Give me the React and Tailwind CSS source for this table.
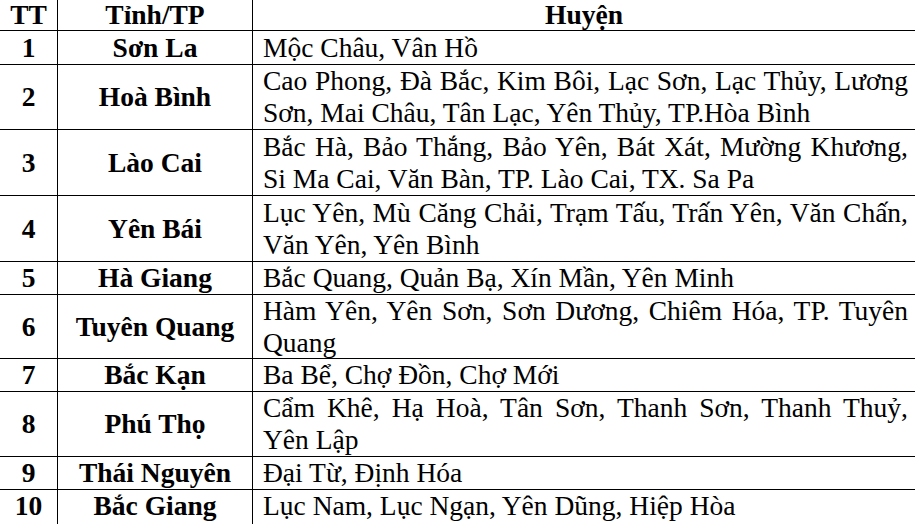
import React from "react";

const rows = [
  ["1", "Sơn La", ["Mộc Châu, Vân Hồ"], "h-[34px]"],
  ["2", "Hoà Bình", ["Cao Phong, Đà Bắc, Kim Bôi, Lạc Sơn, Lạc Thủy, Lương", "Sơn, Mai Châu, Tân Lạc, Yên Thủy, TP.Hòa Bình"], "h-[65px]"],
  ["3", "Lào Cai", ["Bắc Hà, Bảo Thắng, Bảo Yên, Bát Xát, Mường Khương,", "Si Ma Cai, Văn Bàn, TP. Lào Cai, TX. Sa Pa"], "h-[66px]"],
  ["4", "Yên Bái", ["Lục Yên, Mù Căng Chải, Trạm Tấu, Trấn Yên, Văn Chấn,", "Văn Yên, Yên Bình"], "h-[66px]"],
  ["5", "Hà Giang", ["Bắc Quang, Quản Bạ, Xín Mần, Yên Minh"], "h-[33px]"],
  ["6", "Tuyên Quang", ["Hàm Yên, Yên Sơn, Sơn Dương, Chiêm Hóa, TP. Tuyên", "Quang"], "h-[64px]"],
  ["7", "Bắc Kạn", ["Ba Bể, Chợ Đồn, Chợ Mới"], "h-[33px]"],
  ["8", "Phú Thọ", ["Cẩm Khê, Hạ Hoà, Tân Sơn, Thanh Sơn, Thanh Thuỷ,", "Yên Lập"], "h-[65px]"],
  ["9", "Thái Nguyên", ["Đại Từ, Định Hóa"], "h-[33px]"],
  ["10", "Bắc Giang", ["Lục Nam, Lục Ngạn, Yên Dũng, Hiệp Hòa"], "h-[38px]"],
];

export default function App() {
  return (
    <div
      className="w-[916px] h-[524px] overflow-hidden bg-white text-black text-[27.5px]"
      style={{ fontFamily: '"Liberation Serif", "Times New Roman", serif' }}
    >
      <div className="grid grid-cols-[58px_195px_1fr] w-[915px]">
        <div className="border-b border-r border-black font-bold text-center leading-[30px] h-[31px]">TT</div>
        <div className="border-b border-r border-black font-bold text-center leading-[30px] h-[31px]">Tỉnh/TP</div>
        <div className="border-b border-black font-bold text-center leading-[30px] h-[31px]">Huyện</div>
        {rows.map(([tt, name, lines, h], idx) => {
          const last = idx === rows.length - 1;
          return (
            <React.Fragment key={tt}>
              <div className={`${h} ${last ? "" : "border-b"} border-r border-black font-bold flex ${last ? "items-start" : "items-center"} justify-center leading-[32px]`}>
                {tt}
              </div>
              <div className={`${h} ${last ? "" : "border-b"} border-r border-black font-bold flex ${last ? "items-start" : "items-center"} justify-center leading-[32px] whitespace-nowrap`}>
                {name}
              </div>
              <div className={`${h} ${last ? "justify-start" : "border-b justify-center"} border-black pl-[10px] pr-[7px] leading-[32px] flex flex-col`}>
                {lines.map((l, i) => (
                  <div
                    key={i}
                    className={
                      lines.length > 1 && i === 0
                        ? "text-justify [text-align-last:justify] whitespace-nowrap"
                        : "whitespace-nowrap"
                    }
                  >
                    {l}
                  </div>
                ))}
              </div>
            </React.Fragment>
          );
        })}
      </div>
    </div>
  );
}
